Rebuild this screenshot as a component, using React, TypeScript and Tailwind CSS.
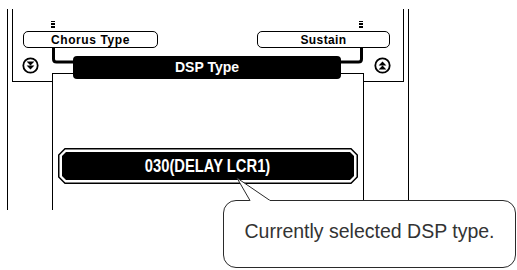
import React from "react";

// Diagram of the DSP Type screen from a keyboard manual

const lcd = { fontFamily: '"Liberation Sans", Arial, sans-serif' };

const Marker = ({ className }: { className: string }) => (
  <div className={`absolute top-[-11px] flex w-[4px] flex-col gap-[1px] ${className}`}>
    <span className="h-[1px] bg-black" />
    <span className="h-[2px] bg-black" />
    <span className="h-[2px] bg-black" />
  </div>
);

const ArrowCircle = ({ up }: { up?: boolean }) => (
  <svg width="17" height="17" viewBox="0 0 17 17" className="shrink-0">
    <circle cx="8.5" cy="8.5" r="7.2" fill="white" stroke="black" strokeWidth="1.8" />
    <g transform={up ? "rotate(180 8.5 8.5)" : undefined}>
      <path d="M4.6 4.6 L12.4 4.6 L8.5 8.6 Z" fill="black" />
      <path d="M4.6 8.4 L12.4 8.4 L8.5 12.4 Z" fill="black" />
    </g>
  </svg>
);

const Connectors = () => (
  <svg
    className="absolute inset-0"
    width="517"
    height="270"
    viewBox="0 0 517 270"
    fill="none"
    shapeRendering="crispEdges"
  >
    <g stroke="black" strokeWidth="1">
      <path d="M7.5 9 V210" />
      <path d="M12.5 9 V81.5 H52.5" />
      <path d="M52.5 210 V73.5 H73" />
      <path d="M408.5 9 V200" />
      <path d="M403.5 9 V81.5 H363.5" />
      <path d="M363.5 200 V73.5 H341" />
    </g>
    <g stroke="black" strokeWidth="3" shapeRendering="auto">
      <path d="M53.5 48 V59 Q53.5 62 56.5 62 H73" />
      <path d="M361.5 48 V59 Q361.5 62 358.5 62 H341" />
    </g>
  </svg>
);

const ValueBar = () => (
  <div className="relative ml-[35px] mt-[69px] h-[36px] w-[300px]">
    <svg className="absolute inset-0" width="300" height="36" viewBox="0 0 300 36">
      <path
        d="M7 0.75 H293 L299.25 7 V29 L293 35.25 H7 L0.75 29 V7 Z"
        fill="white"
        stroke="black"
        strokeWidth="1.5"
      />
      <path d="M8 4 H292 L296 8 V28 L292 32 H8 L4 28 V8 Z" fill="black" />
    </svg>
    <div className="relative flex h-full items-center justify-center">
      <span
        className="origin-center scale-x-[0.82] text-[18px] font-bold leading-none text-white"
        style={lcd}
      >
        030(DELAY LCR1)
      </span>
    </div>
  </div>
);

const Bubble = () => (
  <div className="absolute left-[223px] top-[200px] h-[68px] w-[293px]">
    <div className="flex h-full items-center justify-center rounded-[13px] border border-[#2a2a2a] bg-white pb-[4px]">
      <span className="text-[19.5px] text-[#333]" style={lcd}>
        Currently selected DSP type.
      </span>
    </div>
    <svg
      className="absolute left-0 top-[-23px]"
      width="60"
      height="25"
      viewBox="0 0 60 25"
      fill="none"
    >
      <path d="M27 23.5 L14 1 L47 23.5" stroke="#2a2a2a" strokeWidth="1" fill="white" />
      <rect x="27.5" y="23" width="19" height="2" fill="white" />
    </svg>
  </div>
);

export default function App() {
  return (
    <div className="relative h-[270px] w-[517px] overflow-hidden bg-white">
      <Connectors />

      <div className="relative flex flex-col items-start pl-[23px] pt-[31px]" style={lcd}>
        {/* part names */}
        <div className="flex gap-[99px]">
          <div className="relative flex h-[17px] w-[135px] items-center justify-center rounded-[5px] border-[1.5px] border-black bg-white">
            <Marker className="left-[27px]" />
            <span className="text-[12px] font-bold leading-none tracking-[0.6px]">Chorus Type</span>
          </div>
          <div className="relative flex h-[17px] w-[133px] items-center justify-center rounded-[5px] border-[1.5px] border-black bg-white">
            <Marker className="left-[101px]" />
            <span className="text-[12px] font-bold leading-none tracking-[0.4px]">Sustain</span>
          </div>
        </div>

        {/* function name with scroll arrows */}
        <div className="-ml-[1px] mt-[8px] flex items-start">
          <div className="mt-[1px]">
            <ArrowCircle />
          </div>
          <div className="ml-[34px] flex h-[23px] w-[268px] items-center justify-center rounded-[4px] bg-black text-[14px] font-bold text-white">
            DSP Type
          </div>
          <div className="ml-[33px] mt-[1px]">
            <ArrowCircle up />
          </div>
        </div>

        <ValueBar />
      </div>

      <Bubble />
    </div>
  );
}
